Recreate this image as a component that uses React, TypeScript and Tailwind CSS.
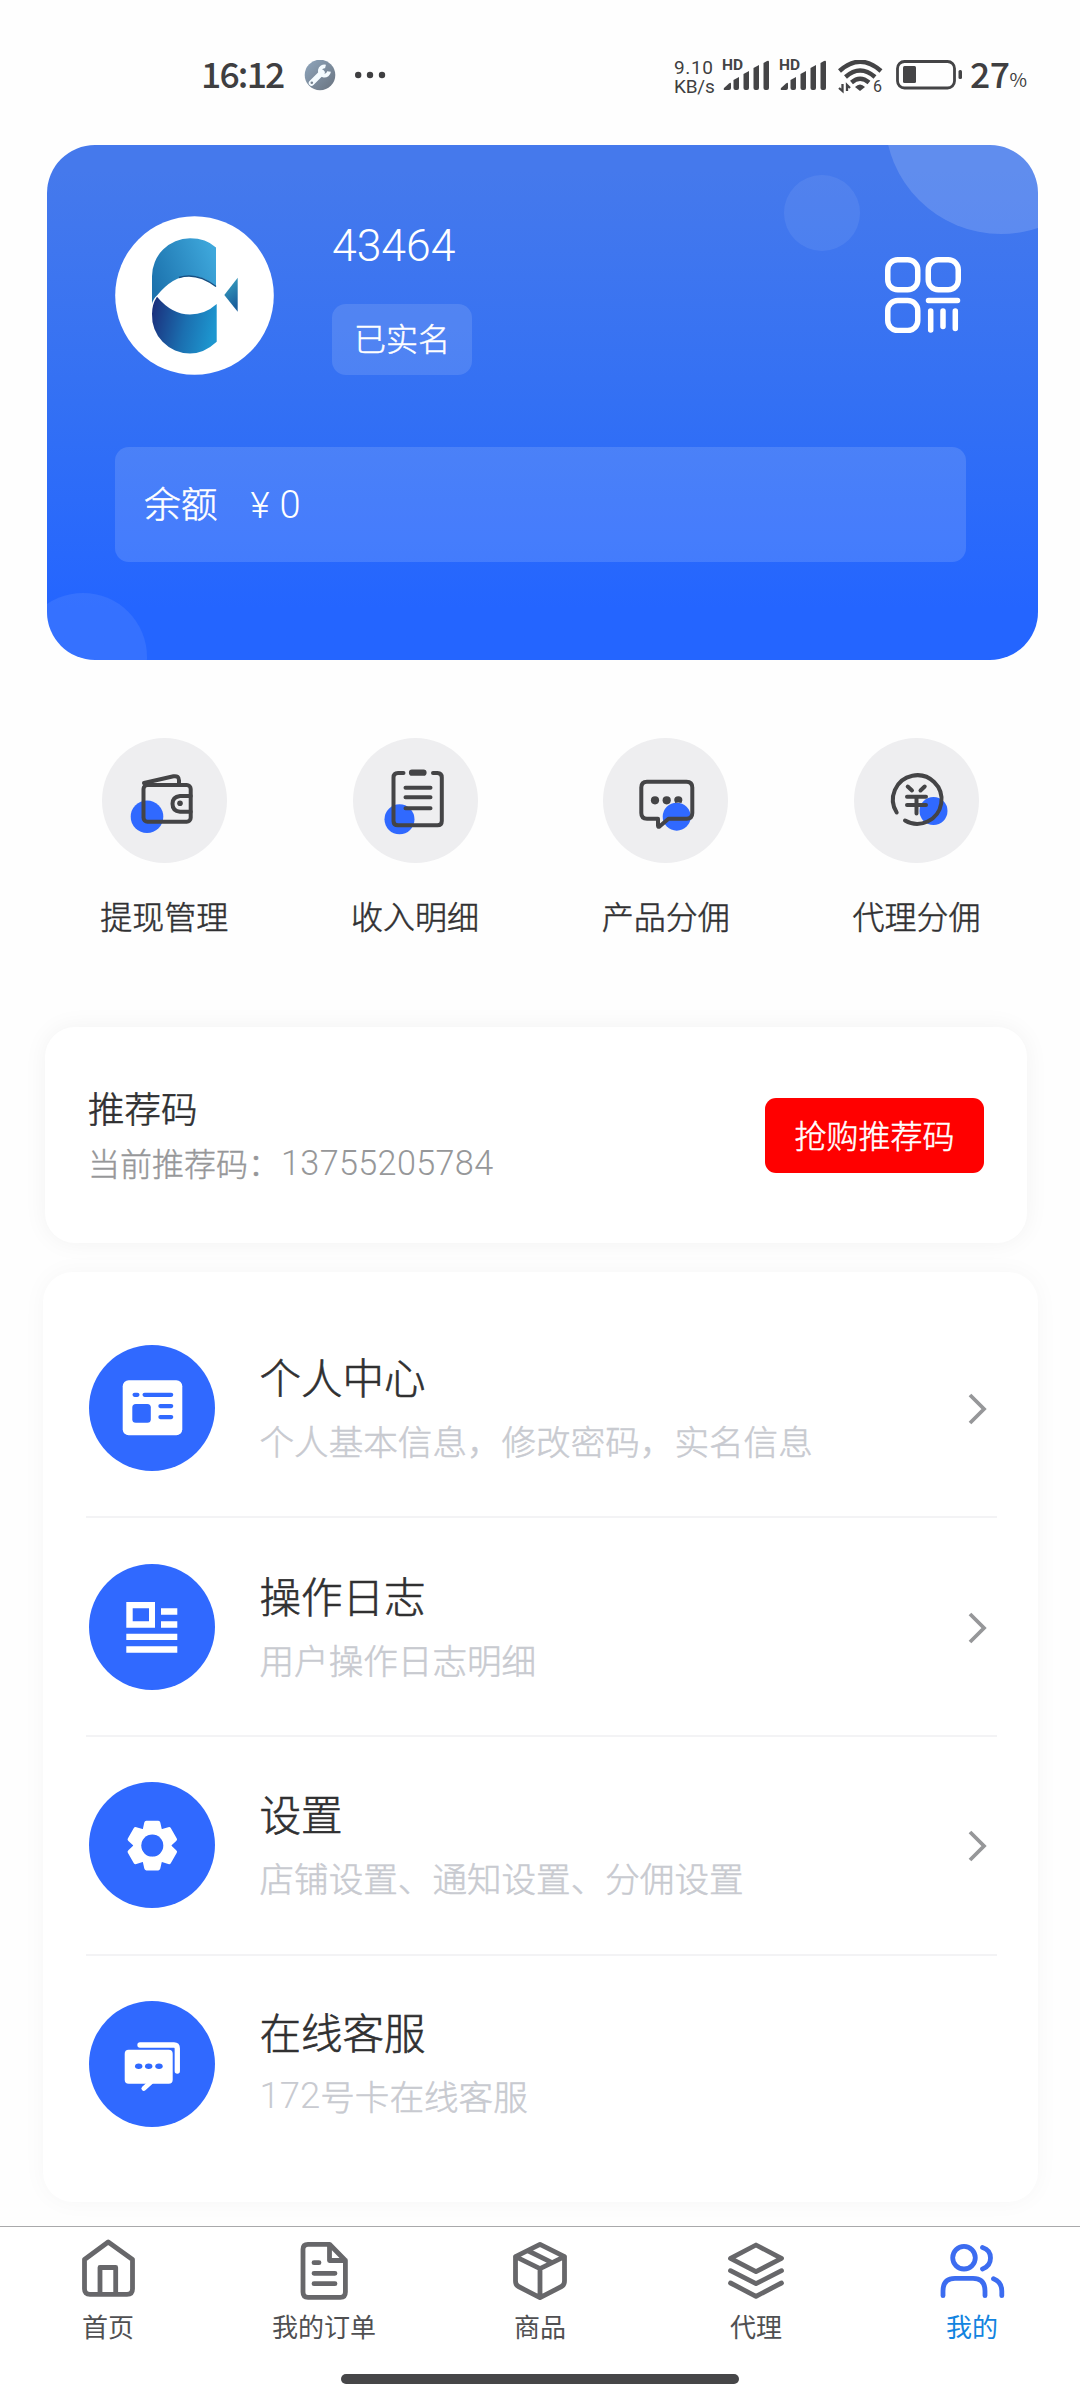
import type { ReactNode } from "react";

const INK = "#444446";
const BLUE = "#3069ff";

function SignalBars() {
  return (
    <div className="relative h-[30px] w-[46px] shrink-0">
      <span className="absolute -left-px -top-[2px] font-[Roboto] text-[15.5px] font-bold leading-[14px] text-[#444446]">
        HD
      </span>
      <svg width="46" height="30" viewBox="0 0 46 30" fill={INK}>
        <path d="M1 28 L6 23.5 Q8 22 8 24 V28 Q8 30 6 30 H2 Q0 30 1 28Z" />
        <path d="M10.500 20 L16 17 V28 Q16 30 14 30 H12.500 Q10.500 30 10.500 28Z" />
        <path d="M20.500 14 L26 11 V28 Q26 30 24 30 H22.500 Q20.500 30 20.500 28Z" />
        <path d="M30.500 8 L36 5 V28 Q36 30 34 30 H32.500 Q30.500 30 30.500 28Z" />
        <path d="M40.500 3 L44 1 Q46 0 46 2 V28 Q46 30 44 30 H42.500 Q40.500 30 40.500 28Z" />
      </svg>
    </div>
  );
}

function StatusBar() {
  return (
    <header className="flex h-[145px] items-start pl-[201px] pt-[60px] text-[#3f3f41]">
      <span className="-mt-[3px] w-[97px] text-[35.5px] font-medium leading-[32px] tracking-[-1.8px]">16:12</span>
      <svg className="ml-[6px]" width="32" height="32" viewBox="0 0 32 32">
        <defs>
          <linearGradient id="tool" x1="0" y1="0" x2="1" y2="1">
            <stop offset="0" stopColor="#8fa6bd" />
            <stop offset="1" stopColor="#69737f" />
          </linearGradient>
        </defs>
        <circle cx="16" cy="15" r="15.3" fill="url(#tool)" />
        <path d="M7.500 23 L18 12.500" stroke="#f4fbff" strokeWidth="5.500" strokeLinecap="round" />
        <path d="M21.500 6.500 A4.600 4.600 0 1 0 25 11.500" stroke="#f4fbff" strokeWidth="3.800" fill="none" />
        <circle cx="7.800" cy="22.800" r="1.300" fill="#75818f" />
      </svg>
      <svg className="ml-[19px]" width="32" height="32" viewBox="0 0 32 32" fill="#3f3f41">
        <circle cx="3.2" cy="15" r="3.2" />
        <circle cx="15" cy="15" r="3.2" />
        <circle cx="27" cy="15" r="3.2" />
      </svg>
      <div className="-mt-px ml-[287px] w-[49px] font-[Roboto] text-[19px] font-normal leading-[18.500px]">
        <div className="tracking-[0.6px]">9.10</div>
        <div className="tracking-[-0.2px]">KB/s</div>
      </div>
      <SignalBars />
      <div className="w-[11px]" />
      <SignalBars />
      <div className="relative ml-[12px] h-[34px] w-[46px]">
        <svg width="46" height="34" viewBox="0 0 46 34" fill="none" stroke={INK} strokeWidth="4.4">
          <path d="M1.5 11 Q22 -7.500 43 11" />
          <path d="M7.500 17 Q22 4 37 17" />
          <path d="M13.500 22.500 Q22 15 31 22.500" />
          <path d="M17 27 Q22 22 27 27 L22 31Z" fill={INK} stroke="none" />
          <path d="M4.500 24 V31 L1 28 M9 31 V25 L12 28" strokeWidth="2.300" />
        </svg>
        <span className="absolute left-[35px] top-[20px] font-[Roboto] text-[16px] font-normal leading-[14px]">6</span>
      </div>
      <svg className="ml-[12px]" width="68" height="32" viewBox="0 0 68 32">
        <rect x="1.500" y="1.500" width="57" height="26.500" rx="7" fill="none" stroke={INK} strokeWidth="2.800" />
        <rect x="7" y="6" width="13" height="17" rx="1.500" fill={INK} />
        <rect x="62.500" y="10" width="3.500" height="9" rx="1.500" fill={INK} />
      </svg>
      <span className="-mt-[3px] ml-[6px] text-[35.5px] font-medium leading-[32px] tracking-[-0.5px]">27</span>
      <span className="pt-[9px] text-[19px] font-normal leading-[20px]">%</span>
    </header>
  );
}

function Logo() {
  return (
    <svg width="159" height="159" viewBox="0 0 159 159">
      <defs>
        <linearGradient id="finTop" x1="0" y1="0.7" x2="1" y2="0.3">
          <stop offset="0" stopColor="#1c72ad" />
          <stop offset="1" stopColor="#3ea7db" />
        </linearGradient>
        <linearGradient id="finBottom" x1="0" y1="0.2" x2="1" y2="0.4">
          <stop offset="0" stopColor="#1b2f7c" />
          <stop offset="0.55" stopColor="#1b6fb0" />
          <stop offset="1" stopColor="#1d96cf" />
        </linearGradient>
        <linearGradient id="tail" x1="0" y1="0" x2="0.3" y2="1">
          <stop offset="0" stopColor="#3aa7c4" />
          <stop offset="1" stopColor="#1a5f9c" />
        </linearGradient>
      </defs>
      <circle cx="79.500" cy="79.500" r="79.300" fill="#fff" />
      <path d="M37 88 V60.500 A38 38 0 0 1 75 22.300 Q91 22.300 101 31.500 V70.700 Q89 60 75 60 Q58 60 42 79.500 Q38 83 37 88Z" fill="url(#finTop)" />
      <path d="M64 61.500 Q82 56 101 70.500" fill="none" stroke="#174f82" strokeWidth="1.500" />
      <path d="M42 80.700 Q57 98.500 75 98.500 Q90 98.500 101.700 88 V125.700 Q89 137.500 75 137.500 A38 38 0 0 1 37 98 Q37 88 42 80.700Z" fill="url(#finBottom)" />
      <path d="M109.300 79 L122.700 61.700 V95.700Z" fill="url(#tail)" />
    </svg>
  );
}

function ProfileCard() {
  return (
    <section className="relative ml-[47px] h-[515px] w-[991px] overflow-hidden rounded-[48px] bg-linear-to-b from-[#4579ec] from-5% via-[#3370f4] via-50% to-[#2465ff] to-90% pl-[68px] pt-[71px] text-white">
      <div className="absolute left-[838px] top-[-143px] size-[232px] rounded-full bg-white/15" />
      <div className="absolute left-[737px] top-[30px] size-[76px] rounded-full bg-white/7" />
      <div className="absolute left-[-28px] top-[448px] size-[128px] rounded-full bg-white/8" />
      <div className="flex">
        <Logo />
        <div className="ml-[58px]">
          <div className="mt-[6px] h-[46px] font-[Roboto] text-[44.5px] font-light leading-[48px]">43464</div>
          <div className="mt-[36px] flex h-[71px] w-[140px] items-center justify-center rounded-[14px] bg-white/12 pb-[5px] text-[32px] font-light [-webkit-text-stroke:0.5px]">
            已实名
          </div>
        </div>
        <svg className="ml-[413px] mt-[41px]" width="76" height="76" viewBox="0 0 76 76" fill="none" stroke="#fff" strokeWidth="5.500" strokeLinecap="round">
          <rect x="2.750" y="2.750" width="30" height="30" rx="10" />
          <rect x="43.250" y="2.750" width="30" height="30" rx="10" />
          <rect x="2.750" y="43.500" width="30" height="30" rx="10" />
          <path d="M43.500 43.500 H72.500 M45.700 54 V73 M58 54 V69.500 M70.300 54 V71.500" />
        </svg>
      </div>
      <div className="mt-[72px] flex h-[115px] w-[851px] items-center rounded-[14px] bg-white/13 pl-[29px] text-[36.8px] font-light">
        <span className="pb-[3px] [-webkit-text-stroke:0.5px]">余额</span>
        <span className="ml-[33px] w-[29px] pt-[2px] font-[Roboto] text-[37px]">¥</span>
        <span className="pt-[2px] font-[Roboto] text-[38px]">0</span>
      </div>
    </section>
  );
}

function Shortcut({ label, children }: { label: string; children: ReactNode }) {
  return (
    <div className="flex flex-1 flex-col items-center">
      <svg className="rounded-full bg-[#eeeef0]" width="125" height="125" viewBox="0 0 125 125" fill="none" stroke={INK} strokeWidth="4" strokeLinecap="round" strokeLinejoin="round">
        {children}
      </svg>
      <span className="mt-[30px] text-[32px] font-light leading-[44px] text-[#303032] [-webkit-text-stroke:0.5px]">{label}</span>
    </div>
  );
}

function Shortcuts() {
  return (
    <nav className="ml-[39px] mt-[78px] flex w-[1003px]">
      <Shortcut label="提现管理">
        <circle cx="45" cy="78.700" r="16.300" fill={BLUE} stroke="none" />
        <rect x="41.500" y="47" width="47.200" height="36.700" rx="4" />
        <path d="M42 45 L71.500 38.300 Q77 37.500 77 42.500 V46" />
        <path d="M88.700 58 H78 Q70.500 59 70.500 65.700 Q70.500 73 78 73.700 H88.700" />
        <circle cx="78" cy="65.300" r="2.800" fill={INK} stroke="none" />
      </Shortcut>
      <Shortcut label="收入明细">
        <circle cx="46.500" cy="81.300" r="15" fill={BLUE} stroke="none" />
        <path d="M50.500 35 H45 Q40.500 35 40.500 39.500 V83 Q40.500 87.300 45 87.300 H84.500 Q88.800 87.300 88.800 83 V39.500 Q88.800 35 84.500 35 H80" />
        <path d="M59 34.700 H70.500" strokeWidth="6.200" />
        <path d="M52.500 49.700 H77.500 M52.500 59.300 H77.500 M52.500 70.300 H77.500" />
      </Shortcut>
      <Shortcut label="产品分佣">
        <circle cx="73.700" cy="78.700" r="14" fill={BLUE} stroke="none" />
        <path d="M44 43.700 H83.500 Q89.300 43.700 89.300 49.500 V75 Q89.300 80.700 83.500 80.700 H65.500 L56.500 88.500 Q55 89.500 55 87.500 V80.700 H44 Q38.300 80.700 38.300 75 V49.500 Q38.300 43.700 44 43.700Z" />
        <g fill={INK} stroke="none">
          <circle cx="52" cy="62.300" r="4.100" />
          <circle cx="63.700" cy="62.300" r="4.100" />
          <path d="M71.200 62.300 a4.100 4.100 0 1 1 8.200 0 L78.500 65 Q75 64 72.200 65Z" />
        </g>
      </Shortcut>
      <Shortcut label="代理分佣">
        <circle cx="79.500" cy="73" r="14" fill={BLUE} stroke="none" />
        <path d="M42.700 74.500 A24.300 24.300 0 1 1 51 82.500" />
        <path d="M53.700 48.500 L58 52.500 M70.700 48.500 L66.500 52.500 M53 58.700 H72 M53 67 H72 M62.500 59 V75.500" />
      </Shortcut>
    </nav>
  );
}

function ReferralCard() {
  return (
    <section className="ml-[45px] mt-[90px] flex h-[216px] w-[982px] items-center justify-between rounded-[30px] bg-white pl-[43px] pr-[43px] shadow-[0_0_24px_rgba(0,0,0,0.05)]">
      <div>
        <div className="text-[36.5px] font-light leading-[55px] text-[#303031] [-webkit-text-stroke:0.6px]">推荐码</div>
        <div className="flex text-[32px] font-light leading-[55px] text-[#969799] [-webkit-text-stroke:0.4px]">
          当前推荐码：
          <span className="ml-px pt-px font-[Roboto] text-[34.200px] tracking-[0.35px] [-webkit-text-stroke:0px]">13755205784</span>
        </div>
      </div>
      <button className="flex h-[75px] w-[219px] items-center justify-center rounded-[11px] bg-[#ff0000] pb-[3px] text-[32px] font-light text-white [-webkit-text-stroke:0.5px]">
        抢购推荐码
      </button>
    </section>
  );
}

function GearIcon() {
  return (
    <g transform="translate(63.300 63.600)">
      <circle r="14.800" stroke="#fff" strokeWidth="8.500" fill="none" />
      {[0, 60, 120, 180, 240, 300].map((a) => (
        <path key={a} d="M-9.800 -15 L-8 -23 Q-7.600 -24.800 -6 -24.800 H6 Q7.600 -24.800 8 -23 L9.800 -15Z" fill="#fff" transform={`rotate(${a})`} />
      ))}
      <circle r="11" fill={BLUE} />
    </g>
  );
}

function MenuRow({ title, note, arrow = true, last = false, children }: { title: string; note: ReactNode; arrow?: boolean; last?: boolean; children: ReactNode }) {
  return (
    <div className={last ? "flex h-[216px] items-center" : "flex h-[218.800px] items-center border-b-2 border-[#f3f3f5]"}>
      <svg className="ml-[3px] rounded-full bg-[#3069ff]" width="126" height="126" viewBox="0 0 126 126" fill="#fff">
        {children}
      </svg>
      <div className="ml-[44.500px] flex-1">
        <div className="text-[41.5px] font-light leading-[64px] text-[#303031] [-webkit-text-stroke:0.6px]">{title}</div>
        <div className="text-[34.6px] font-light leading-[64px] text-[#c8cad0] [-webkit-text-stroke:0.5px]">{note}</div>
      </div>
      {arrow && (
        <svg className="mr-[9px] mt-[2px]" width="22" height="34" viewBox="0 0 22 34" fill="none" stroke="#969799" strokeWidth="3.800">
          <path d="M4 3 L18 17 L4 31" />
        </svg>
      )}
    </div>
  );
}

function Menu() {
  return (
    <section className="ml-[43px] mt-[29px] h-[930px] w-[995px] rounded-[30px] bg-white pl-[43px] pr-[41px] pt-[27.500px] shadow-[0_0_24px_rgba(0,0,0,0.035)]">
      <MenuRow title="个人中心" note="个人基本信息，修改密码，实名信息">
        <rect x="33.700" y="35.300" width="59.600" height="55" rx="6" />
        <g fill={BLUE}>
          <rect x="43.500" y="47.700" width="7" height="4.200" rx="2.100" />
          <rect x="53.500" y="47.700" width="30.800" height="4.200" rx="2.100" />
          <rect x="43.300" y="59" width="18.500" height="18.700" rx="3.500" />
          <rect x="69.300" y="59" width="15" height="4.200" rx="2.100" />
          <rect x="69.300" y="70" width="15" height="4.200" rx="2.100" />
        </g>
      </MenuRow>
      <MenuRow title="操作日志" note="用户操作日志明细">
        <path fillRule="evenodd" d="M37.300 38 H66 V63.700 H37.300Z M43.700 44.300 V57.300 H60 V44.300Z" />
        <path d="M72 44.300 H88.300 V50.700 H72Z M72 57.300 H88.300 V63.700 H72Z M37.300 69.700 H88.300 V76 H37.300Z M37.300 82.300 H88.300 V88.700 H37.300Z" />
      </MenuRow>
      <MenuRow title="设置" note="店铺设置、通知设置、分佣设置">
        <GearIcon />
      </MenuRow>
      <MenuRow title="在线客服" note={<span className="flex"><span className="pt-px font-[Roboto] text-[36.500px] [-webkit-text-stroke:0px]">172</span>号卡在线客服</span>} arrow={false} last>
        <rect x="35.700" y="48.700" width="48" height="34" rx="4" />
        <path d="M54.800 87.500 L62 81" stroke="#fff" strokeWidth="4.800" strokeLinecap="round" />
        <path d="M51 44 H85 Q88.300 44 88.300 47.500 V70" fill="none" stroke="#fff" strokeWidth="5.300" strokeLinecap="round" />
        <g fill={BLUE}>
          <ellipse cx="49.700" cy="65.300" rx="3.700" ry="2.700" />
          <ellipse cx="59.700" cy="65.300" rx="3.700" ry="2.700" />
          <ellipse cx="70" cy="65.300" rx="3.700" ry="2.700" />
        </g>
      </MenuRow>
    </section>
  );
}

function Tab({ label, active = false, children }: { label: string; active?: boolean; children: ReactNode }) {
  return (
    <div className={active ? "flex flex-1 flex-col items-center text-[#1284e0]" : "flex flex-1 flex-col items-center text-[#505052]"}>
      <svg width="70" height="62" viewBox="-5 0 70 62" fill="none" stroke={active ? "#3c6cf0" : "#67676a"} strokeWidth="4.800" strokeLinecap="round" strokeLinejoin="round">
        {children}
      </svg>
      <span className="mt-[7px] text-[26px] font-normal leading-[36px]">{label}</span>
    </div>
  );
}

function TabBar() {
  return (
    <footer className="mt-[24px] flex h-[175px] flex-col items-center border-t border-[#a9a9ab] bg-white pt-[12px]">
      <div className="flex w-full">
        <Tab label="首页">
          <path d="M30.200 3 L54.500 20.500 V50 Q54.500 55.300 49 55.300 H12 Q6.500 55.300 6.500 50 V20.500Z M22 55 V28.500 H37.700 V55" />
        </Tab>
        <Tab label="我的订单">
          <path d="M35.500 5.300 H14 Q9 5.300 9 10.300 V53 Q9 58.300 14 58.300 H46.400 Q51.400 58.300 51.400 53 V21.500Z M35.500 5.300 V21.500 H51.400 M20 23.700 H25 M20 34.300 H41 M20 44.700 H41" />
        </Tab>
        <Tab label="商品">
          <path d="M30 5.300 L54.500 17.700 V42 Q54.500 46 51.500 47.500 L30 58.700 L8.500 47.500 Q5.500 46 5.500 42 V17.700Z M5.500 17.700 L30 29.700 L54.500 17.700 M30 29.700 V58.500 M18.500 12 L42 23.700" />
        </Tab>
        <Tab label="代理">
          <path d="M30 6 L55.500 19.400 L30 32.700 L4.500 19.400Z M4.500 31.700 L30 44.700 L55.500 31.700 M4.500 44 L30 57.300 L55.500 44" />
        </Tab>
        <Tab label="我的" active>
          <circle cx="22" cy="18.700" r="11.300" />
          <path d="M1 56.700 V52 Q1 39.300 13 39.300 H31 Q43 39.300 43 52 V56.700 M40.500 8.500 Q48.500 11 48.500 19 Q48.500 27 40.500 30 M51.500 39.700 Q59.800 43 59.800 52 V56.700" />
        </Tab>
      </div>
      <div className="mt-[30px] h-[10px] w-[398px] rounded-full bg-[#464648]" />
    </footer>
  );
}

export default function App() {
  return (
    <div className="h-[2400px] w-[1080px] overflow-hidden bg-[#fefefe] font-['Noto_Sans_CJK_SC',sans-serif]">
      <StatusBar />
      <ProfileCard />
      <Shortcuts />
      <ReferralCard />
      <Menu />
      <TabBar />
    </div>
  );
}
